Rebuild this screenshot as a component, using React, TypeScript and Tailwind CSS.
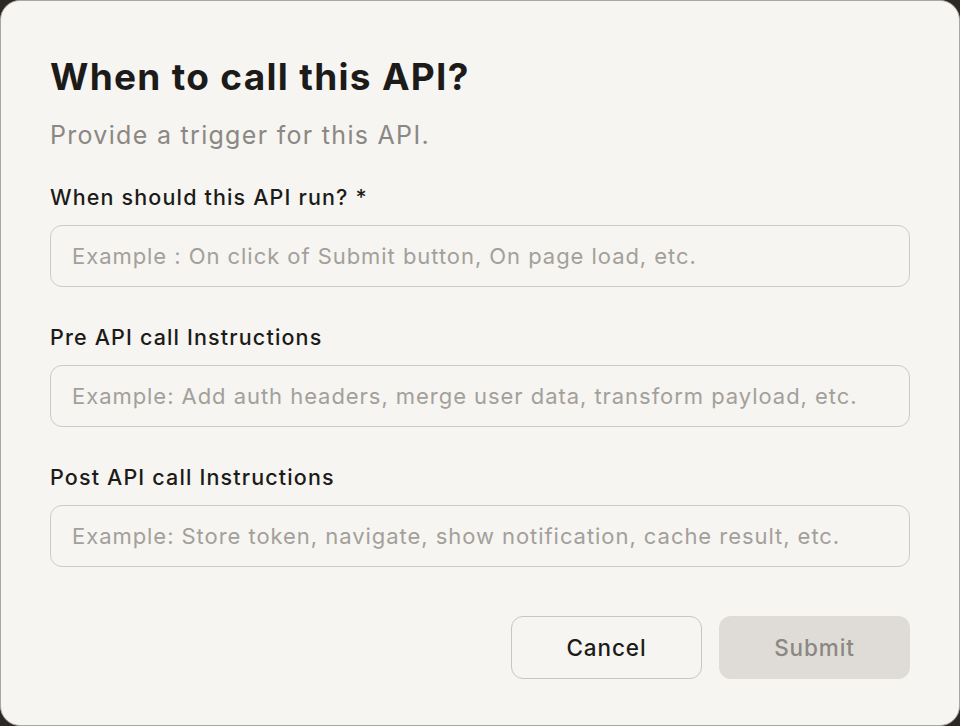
export default function App() {
  const fields = [
    {
      label: "When should this API run? *",
      placeholder: "Example : On click of Submit button, On page load, etc.",
    },
    {
      label: "Pre API call Instructions",
      placeholder:
        "Example: Add auth headers, merge user data, transform payload, etc.",
    },
    {
      label: "Post API call Instructions",
      placeholder:
        "Example: Store token, navigate, show notification, cache result, etc.",
    },
  ];

  return (
    <div className="h-[726px] w-[960px] overflow-hidden bg-[#2c2824] font-['Inter',sans-serif]">
      <div className="flex h-full flex-col rounded-[20px] border border-[#a9a7a3] bg-[#f6f5f1] px-[49px] pt-[54px]">
        {/* Header */}
        <h2 className="text-[37px] font-bold leading-[44px] tracking-[1.3px] text-[#1d1b19]">
          When to call this API?
        </h2>
        <p className="mt-[20px] text-[25px] leading-[32px] tracking-[1.3px] text-[#8b8884]">
          Provide a trigger for this API.
        </p>

        {/* Fields */}
        <div className="mt-[32px] flex flex-col gap-[36px]">
          {fields.map((f) => (
            <div key={f.label} className="flex flex-col gap-[14px]">
              <label className="text-[21.5px] font-medium leading-[28px] tracking-[1.15px] text-[#1d1b19]">
                {f.label}
              </label>
              <input
                type="text"
                placeholder={f.placeholder}
                className="h-[62px] w-full rounded-[12px] border-[1.5px] border-[#cdcac5] bg-[#f6f5f1] px-[21px] text-[22px] tracking-[0.95px] text-[#1d1b19] outline-none placeholder:text-[#a3a09b]"
              />
            </div>
          ))}
        </div>

        {/* Actions */}
        <div className="mt-[49px] flex justify-end gap-[17px]">
          <button className="h-[63px] w-[191px] rounded-[12px] border-[1.5px] border-[#c9c6c1] bg-[#f6f5f1] text-[22.5px] font-medium tracking-[0.9px] text-[#1d1b19]">
            Cancel
          </button>
          <button
            disabled
            className="h-[63px] w-[191px] rounded-[12px] bg-[#dfdcd7] text-[22.5px] font-medium tracking-[0.9px] text-[#8b8884]"
          >
            Submit
          </button>
        </div>
      </div>
    </div>
  );
}
